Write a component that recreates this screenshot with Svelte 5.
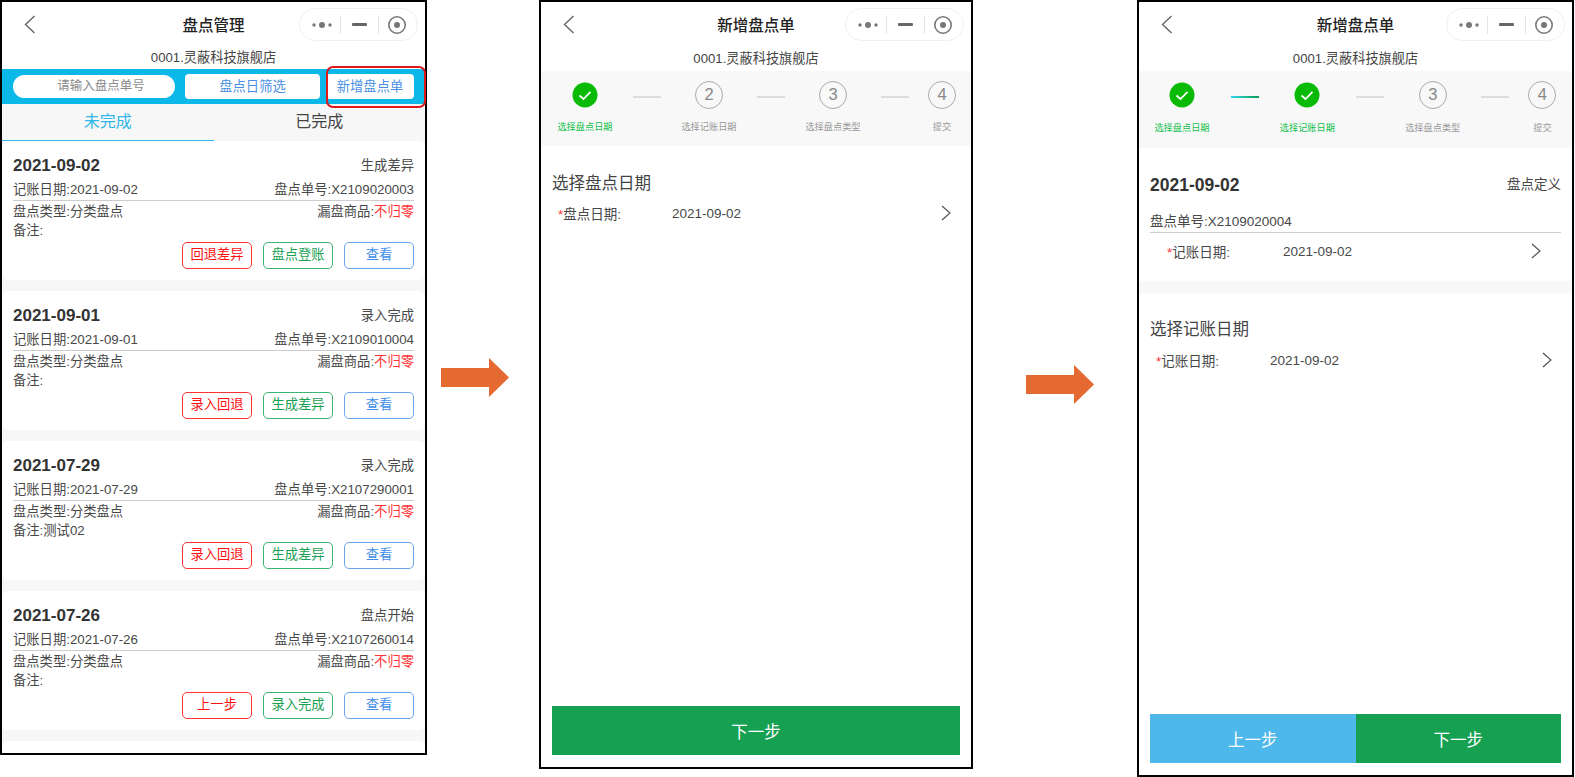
<script>
  const cap = [
    { status: '生成差异', date: '2021-09-02', no: 'X2109020003', note: '', a: '回退差异', b: '盘点登账' },
    { status: '录入完成', date: '2021-09-01', no: 'X2109010004', note: '', a: '录入回退', b: '生成差异' },
    { status: '录入完成', date: '2021-07-29', no: 'X2107290001', note: '测试02', a: '录入回退', b: '生成差异' },
    { status: '盘点开始', date: '2021-07-26', no: 'X2107260014', note: '', a: '上一步', b: '录入完成' }
  ];
  const steps = ['选择盘点日期', '选择记账日期', '选择盘点类型', '提交'];
</script>

{#snippet nav(title)}
  <div class="nav">
    <svg class="back" width="14" height="20" viewBox="0 0 14 20"><path d="M11.5 2 L2.5 10.5 L11.5 19" fill="none" stroke="#666" stroke-width="1.4"/></svg>
    <div class="title">{title}</div>
    <div class="capsule">
      <svg class="more" width="22" height="8" viewBox="0 0 22 8"><circle cx="3" cy="4" r="1.7" fill="#777"/><circle cx="11" cy="4" r="3" fill="#777"/><circle cx="19" cy="4" r="1.7" fill="#777"/></svg>
      <i class="d1"></i>
      <b class="dash"></b>
      <i class="d2"></i>
      <svg class="rec" width="20" height="20" viewBox="0 0 20 20"><circle cx="10" cy="10" r="8.2" fill="none" stroke="#777" stroke-width="1.6"/><circle cx="10" cy="10" r="3" fill="#777"/></svg>
    </div>
  </div>
  <div class="shop">0001.灵蔽科技旗舰店</div>
{/snippet}

{#snippet stepper(done)}
  <div class="steps">
    {#each steps as s, i}
      <div class="step" class:on={i < done}>
        <span class="icon">
          {#if i < done}
            <svg width="26" height="26" viewBox="0 0 26 26"><circle cx="13" cy="13" r="12.5" fill="#09bb07"/><path d="M7.5 13.5 L11.5 17 L18.5 9.8" fill="none" stroke="#fff" stroke-width="1.7"/></svg>
          {:else}
            <span class="num">{i + 1}</span>
          {/if}
        </span>
        <span class="cap">{s}</span>
      </div>
      {#if i < 3}
        <span class="link" class:lit={i < done - 1} class:last={i === 2}></span>
      {/if}
    {/each}
  </div>
{/snippet}

{#snippet field(label, value)}
  <div class="field">
    <span class="lab"><em>*</em>{label}:</span>
    <span class="val">{value}</span>
    <svg width="10" height="16" viewBox="0 0 10 16"><path d="M1 1 L9 8 L1 15" fill="none" stroke="#555" stroke-width="1.2"/></svg>
  </div>
{/snippet}

{#snippet arrow(cls)}
  <svg class="arrow {cls}" width="68" height="39" viewBox="0 0 68 39"><path d="M0 10 H48 V0 L68 19.5 L48 39 V29 H0 Z" fill="#e46a31"/></svg>
{/snippet}

<main class="canvas">
  <section class="phone p1">
    {@render nav('盘点管理')}
    <div class="search">
      <div class="pill input">请输入盘点单号</div>
      <div class="pill date">盘点日筛选</div>
      <div class="pill add">新增盘点单</div>
      <span class="mark"></span>
    </div>
    <div class="tabs">
      <div class="tab active">未完成</div>
      <div class="tab">已完成</div>
    </div>
    <div class="list">
      {#each cap as c}
        <article class="card">
          <div class="row head"><strong>{c.date}</strong><span>{c.status}</span></div>
          <div class="row ruled"><span>记账日期:{c.date}</span><span>盘点单号:{c.no}</span></div>
          <div class="row third"><span>盘点类型:分类盘点</span><span>漏盘商品:<em>不归零</em></span></div>
          <div class="note">备注:{c.note}</div>
          <div class="btns">
            <span class="btn red">{c.a}</span>
            <span class="btn green">{c.b}</span>
            <span class="btn blue">查看</span>
          </div>
        </article>
      {/each}
      <div class="card stub"></div>
    </div>
  </section>

  {@render arrow('a1')}

  <section class="phone p2">
    {@render nav('新增盘点单')}
    {@render stepper(1)}
    <div class="body">
      <h2>选择盘点日期</h2>
      {@render field('盘点日期', '2021-09-02')}
      <div class="foot"><button class="next">下一步</button></div>
    </div>
  </section>

  {@render arrow('a2')}

  <section class="phone p3">
    {@render nav('新增盘点单')}
    {@render stepper(2)}
    <div class="summary">
      <div class="row head big"><strong>2021-09-02</strong><span>盘点定义</span></div>
      <div class="order">盘点单号:X2109020004</div>
      <div class="inset">{@render field('记账日期', '2021-09-02')}</div>
    </div>
    <div class="body second">
      <h2>选择记账日期</h2>
      {@render field('记账日期', '2021-09-02')}
      <div class="foot"><button class="prev">上一步</button><button class="next">下一步</button></div>
    </div>
  </section>
</main>

<style>
  :global(body) { margin: 0; background: #fff; }
  .canvas {
    display: flex; align-items: flex-start; width: 1575px; height: 777px; overflow: hidden;
    font-family: "Liberation Sans", "Noto Sans CJK SC", sans-serif; color: #484848;
  }
  .phone {
    box-sizing: border-box; border: 2px solid #000; background: #fff; flex: none;
    display: flex; flex-direction: column;
  }
  .p1 { width: 427px; height: 755px; }
  .p2 { width: 434px; height: 769px; }
  .p3 { width: 437px; height: 777px; }
  .arrow { flex: none; }
  .a1 { margin: 358px 30px 0 14px; }
  .a2 { margin: 365px 43px 0 53px; }

  .nav { height: 44px; position: relative; display: flex; align-items: center; justify-content: center; flex: none; }
  .back { position: absolute; left: 21px; top: 12px; }
  .title { font-size: 15.5px; color: #222; font-weight: 500; }
  .capsule {
    position: absolute; right: 7px; top: 6px; width: 119px; height: 33px; box-sizing: border-box;
    border: 1px solid #f0f0f0; border-radius: 17px; display: flex; align-items: center; padding-left: 11px;
  }
  .capsule i { width: 1px; height: 18px; background: #e4e4e4; flex: none; }
  .d1 { margin-left: 7px; }
  .d2 { margin-left: 11px; }
  .dash { width: 15px; height: 3px; background: #666; border-radius: 1px; margin-left: 11px; flex: none; }
  .rec { margin-left: 8px; flex: none; }
  .more { flex: none; }
  .shop { height: 25px; line-height: 25px; text-align: center; font-size: 13.2px; color: #444; flex: none; }
  .p1 .shop { height: 23px; line-height: 23px; }

  .search { height: 35px; background: #0cb8e8; position: relative; display: flex; align-items: center; padding-left: 11px; flex: none; }
  .pill { background: #fff; font-size: 13.3px; text-align: center; height: 25px; line-height: 25px; box-sizing: border-box; flex: none; }
  .input { width: 162px; height: 23px; line-height: 23px; border-radius: 12px; color: #8a8a8a; padding-left: 14px; font-size: 12.5px; }
  .date { width: 135px; margin-left: 10px; border-radius: 4px; color: #4a90e2; }
  .add { width: 88px; margin-left: 6px; border-radius: 4px; color: #4a90e2; }
  .mark { position: absolute; right: -1px; top: -3px; width: 100px; height: 42px; box-sizing: border-box; border: 2px solid #e01818; border-radius: 7px; }

  .tabs { display: flex; height: 37px; background: #f7f7f7; flex: none; }
  .tab { flex: 1; text-align: center; font-size: 16px; line-height: 36px; color: #444; box-sizing: border-box; }
  .tab.active { color: #30b8e8; border-bottom: 1.5px solid #30b8e8; }

  .list { background: #f7f7f7; flex: 1; min-height: 0; overflow: hidden; display: flex; flex-direction: column; gap: 11px; }
  .card { background: #fff; border-radius: 6px; height: 139px; box-sizing: border-box; padding: 12px 11px 0 11px; flex: none; }
  .stub { height: 40px; }
  .row { display: flex; justify-content: space-between; font-size: 13.3px; line-height: 20px; }
  .row em { color: #f33; font-style: normal; }
  .head { height: 26px; line-height: 26px; align-items: center; }
  .head strong { font-size: 17px; color: #333; }
  .ruled { border-bottom: 1px solid #ccc; height: 22px; line-height: 22px; box-sizing: border-box; }
  .third { height: 19px; line-height: 21px; }
  .note { font-size: 13.3px; line-height: 22px; height: 22px; }
  .btns { display: flex; justify-content: flex-end; gap: 11px; }
  .btn { width: 70px; height: 27px; box-sizing: border-box; border-radius: 5px; border: 1px solid; font-size: 13.3px; line-height: 24px; text-align: center; }
  .red { color: #f11; border-color: #f33; }
  .green { color: #1aa053; border-color: #3cb371; }
  .blue { color: #3f8ee8; border-color: #69a4ef; }

  .steps { height: 75px; background: #f8f8f8; display: flex; align-items: flex-start; flex: none; padding: 10px 0 0 16px; box-sizing: border-box; }
  .p3 .steps { height: 77px; padding-left: 15px; }
  .step { width: 56px; flex: none; display: flex; flex-direction: column; align-items: center; }
  .icon { height: 28px; display: flex; align-items: center; justify-content: center; }
  .num { box-sizing: border-box; width: 28px; height: 28px; border: 1.3px solid #aaa; border-radius: 50%; color: #888; font-size: 16.5px; line-height: 25px; text-align: center; }
  .cap { font-size: 9.2px; color: #999; white-space: nowrap; margin-top: 12px; line-height: 12px; }
  .p3 .cap { margin-top: 13px; }
  .on .cap { color: #10c04a; }
  .link { width: 28px; height: 1.5px; background: #ddd; margin: 15px 20px 0; flex: none; }
  .p3 .link { margin: 15px 20.7px 0; }
  .link.last, .p3 .link.last { margin-right: 5px; }
  .link.lit { background: linear-gradient(90deg, #35d6e8, #0a9a55); }

  .body { flex: 1; display: flex; flex-direction: column; padding: 0 11px; min-height: 0; }
  .body h2 { font-size: 16.5px; font-weight: 400; color: #444; margin: 26px 0 0; line-height: 22px; }
  .field { display: flex; align-items: center; font-size: 13.5px; height: 26px; margin-top: 6px; padding-left: 6px; }
  .lab { width: 114px; flex: none; }
  .lab em { color: #f33; font-style: normal; }
  .val { flex: 1; }
  .field svg { margin-right: 9px; flex: none; }
  .foot { margin-top: auto; margin-bottom: 12px; display: flex; }
  button { flex: 1; height: 49px; border: 0; color: #fff; font: inherit; font-size: 16.5px; padding: 0; }
  .next { background: #16a052; }
  .prev { background: #4fb8ea; }

  .summary { border-bottom: 12px solid #f8f8f8; padding: 24px 11px 0 11px; height: 145px; box-sizing: border-box; flex: none; }
  .big strong { font-size: 17.5px; }
  .big span { font-size: 13.5px; }
  .order { font-size: 13.5px; border-bottom: 1px solid #ccc; height: 23px; line-height: 24px; margin-top: 12px; box-sizing: border-box; }
  .inset { padding: 0 11px 0 11px; }
  .inset .field { margin-top: 5px; }
  .inset .lab { width: 116px; }
  .second h2 { margin-top: 25px; }
  .second .field { margin-top: 7px; }
</style>
